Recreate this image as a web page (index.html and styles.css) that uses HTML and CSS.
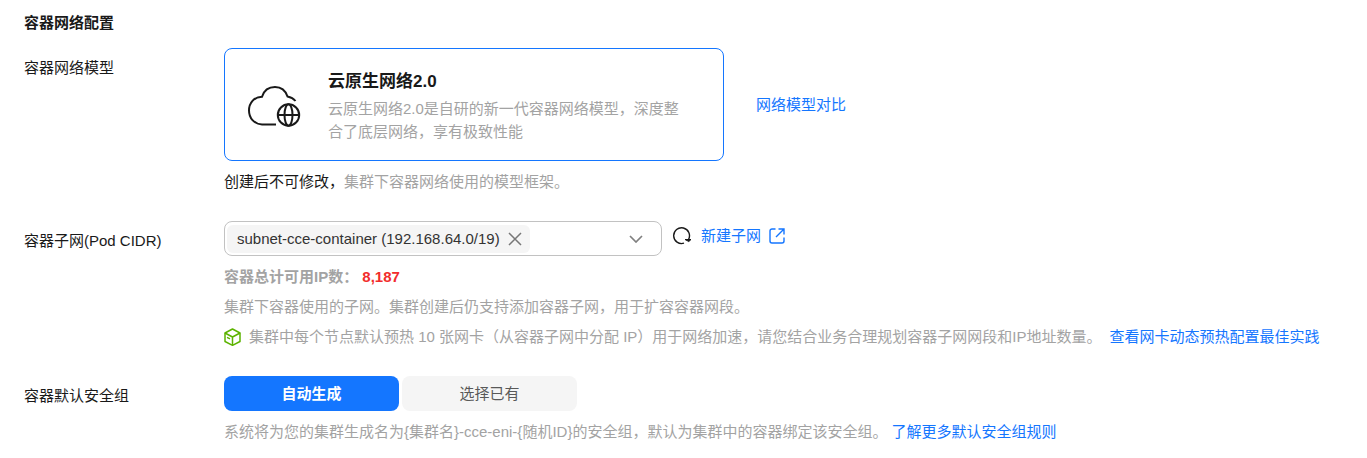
FILE: index.html
```
<!DOCTYPE html>
<html lang="zh">
<head>
    <meta charset="UTF-8">
    <meta name="viewport" content="width=device-width, initial-scale=1.0">
    <title>容器网络配置</title>
    <link rel="stylesheet" href="styles.css">
</head>
<body>
    <form class="network-form">
        <h2 class="form-title">容器网络配置</h2>

        <!-- 网络模型 -->
        <div class="form-row">
            <span class="form-label" id="modelLabel">容器网络模型</span>
            <div class="form-content">
                <div class="model-line">
                    <button type="button" class="model-card" aria-pressed="true" aria-describedby="modelLabel">
                        <svg class="model-icon" width="54" height="42" viewBox="0 0 54 42" fill="none" stroke="#191919" stroke-width="2">
                            <path d="M28 39.500H14C6 39 1 33 1 25.500C1 18 6 12 14 11.700C16 5.500 21 2 27 2C33 2 37.500 5.500 39.500 11.500C43 12.200 45.500 13.500 47.500 16"/>
                            <circle cx="40.500" cy="30" r="10.700"/>
                            <ellipse cx="40.500" cy="30" rx="4" ry="10.700"/>
                            <path d="M30 30H51"/>
                        </svg>
                        <span class="model-text">
                            <span class="model-name">云原生网络2.0</span>
                            <span class="model-desc">云原生网络2.0是自研的新一代容器网络模型，深度整合了底层网络，享有极致性能</span>
                        </span>
                    </button>
                    <a href="#" class="link">网络模型对比</a>
                </div>
                <p class="hint"><span class="hint-strong">创建后不可修改，</span>集群下容器网络使用的模型框架。</p>
            </div>
        </div>

        <!-- 容器子网 -->
        <div class="form-row">
            <label class="form-label" for="subnet">容器子网(Pod CIDR)</label>
            <div class="form-content">
                <div class="subnet-line">
                    <div class="subnet-box">
                        <span class="tag">
                            subnet-cce-container (192.168.64.0/19)
                            <button type="button" class="icon-btn" aria-label="移除">
                                <svg width="14" height="14" viewBox="0 0 14 14" fill="none" stroke="#777" stroke-width="1.500">
                                    <path d="M1 1L13 13M13 1L1 13"/>
                                </svg>
                            </button>
                        </span>
                        <select id="subnet" class="subnet-select">
                            <option value=""></option>
                        </select>
                        <svg class="arrow" width="14" height="8" viewBox="0 0 14 8" fill="none" stroke="#808080" stroke-width="1.700">
                            <path d="M1 1L7 7L13 1"/>
                        </svg>
                    </div>
                    <div class="subnet-actions">
                        <button type="button" class="icon-btn" aria-label="刷新">
                            <svg width="20" height="18" viewBox="0 0 20 18" fill="none" stroke="#191919" stroke-width="1.400">
                                <path d="M12 16.200A7.900 7.900 0 1 1 16.500 12.500"/>
                                <path d="M13 12.500H19L16.800 14.500Z" fill="#191919" stroke-width="1"/>
                            </svg>
                        </button>
                        <a href="#" class="link link-new">
                            新建子网
                            <svg width="16" height="16" viewBox="0 0 16 16" fill="none" stroke="#1476ff" stroke-width="1.400">
                                <path d="M6.500 1H3A2 2 0 0 0 1 3V13A2 2 0 0 0 3 15H13A2 2 0 0 0 15 13V9.500"/>
                                <path d="M9.500 1H15V6.500M15 1L7 9"/>
                            </svg>
                        </a>
                    </div>
                </div>
                <p class="hint hint-bold">容器总计可用IP数： <span class="ip-count">8,187</span></p>
                <p class="hint">集群下容器使用的子网。集群创建后仍支持添加容器子网，用于扩容容器网段。</p>
                <p class="hint hint-icon">
                    <svg width="17" height="18" viewBox="0 0 17 18" fill="none" stroke="#5cb300" stroke-width="1.500" stroke-linejoin="round">
                        <path d="M8.500 1L16 5V13.500L8.500 17.300L1 13.500V5Z"/>
                        <path d="M1 5L8.500 9L16 5M8.500 9V17M3 9.300L6 10.800"/>
                    </svg>
                    <span>集群中每个节点默认预热 10 张网卡（从容器子网中分配 IP）用于网络加速，请您结合业务合理规划容器子网网段和IP地址数量。</span>
                    <a href="#" class="link">查看网卡动态预热配置最佳实践</a>
                </p>
            </div>
        </div>

        <!-- 安全组 -->
        <div class="form-row">
            <span class="form-label" id="groupLabel">容器默认安全组</span>
            <div class="form-content">
                <div class="tabs" role="group" aria-labelledby="groupLabel">
                    <button type="button" class="tab active" aria-pressed="true">自动生成</button>
                    <button type="button" class="tab" aria-pressed="false">选择已有</button>
                </div>
                <p class="hint">系统将为您的集群生成名为{集群名}-cce-eni-{随机ID}的安全组，默认为集群中的容器绑定该安全组。 <a href="#" class="link">了解更多默认安全组规则</a></p>
            </div>
        </div>
    </form>
</body>
</html>
```

FILE: styles.css
```
* {
    box-sizing: border-box;
}
body {
    margin: 0;
    padding: 12px 24px;
    background-color: #fff;
    color: #191919;
    font-family: "Liberation Sans", Arial, "Noto Sans CJK SC", sans-serif;
    font-size: 15px;
    line-height: 22px;
}
button, select {
    font: inherit;
    color: inherit;
    cursor: pointer;
}
.network-form {
    display: flex;
    flex-direction: column;
    gap: 28px;
}
.form-title {
    margin: 0 0 -14px;
    font-size: 15px;
    font-weight: bold;
}
.form-row {
    display: grid;
    grid-template-columns: 200px 1fr;
}
.form-label {
    padding-top: 9px;
}
.link {
    color: #1476ff;
    text-decoration: none;
}
.hint {
    margin: 8px 0 0;
    color: #a3a3a3;
}
.hint:nth-child(2) {
    margin-top: 10px;
}
.hint-strong {
    color: #191919;
}
.hint-bold {
    font-weight: bold;
}
.hint-icon {
    display: flex;
    align-items: center;
    gap: 8px;
}
.ip-count {
    color: #f22c2c;
}
.model-line {
    display: flex;
    align-items: center;
    gap: 32px;
}
.model-card {
    display: flex;
    align-items: center;
    gap: 26px;
    width: 500px;
    padding: 19px 36px 17px 23px;
    border: 1px solid #1476ff;
    border-radius: 8px;
    background-color: #fff;
    text-align: left;
}
.model-icon {
    flex: none;
}
.model-name {
    display: block;
    margin-bottom: 2px;
    font-size: 17px;
    line-height: 27px;
    font-weight: bold;
}
.model-desc {
    display: block;
    color: #a3a3a3;
    line-height: 23px;
}
.subnet-line {
    display: flex;
    gap: 10px;
}
.subnet-box {
    display: flex;
    align-items: center;
    width: 438px;
    height: 35px;
    padding: 0 18px 0 2px;
    border: 1px solid #c2c2c2;
    border-radius: 8px;
}
.tag {
    display: flex;
    align-items: center;
    gap: 8px;
    padding: 3px 8px 3px 10px;
    border-radius: 6px;
    background-color: #f5f5f5;
    color: #333;
}
.icon-btn {
    display: flex;
    padding: 0;
    border: none;
    background: none;
}
.subnet-select {
    flex: 1;
    min-width: 0;
    border: none;
    background: none;
    appearance: none;
}
.subnet-actions {
    display: flex;
    align-items: center;
    gap: 9px;
    height: 30px;
}
.link-new {
    display: flex;
    align-items: center;
    gap: 8px;
}
.tabs {
    display: flex;
    gap: 3px;
}
.tab {
    width: 175px;
    height: 35px;
    padding: 0;
    border: none;
    border-radius: 8px;
    background-color: #f5f5f5;
    color: #595959;
}
.tab.active {
    background-color: #1476ff;
    color: #fff;
    font-weight: bold;
}
```
